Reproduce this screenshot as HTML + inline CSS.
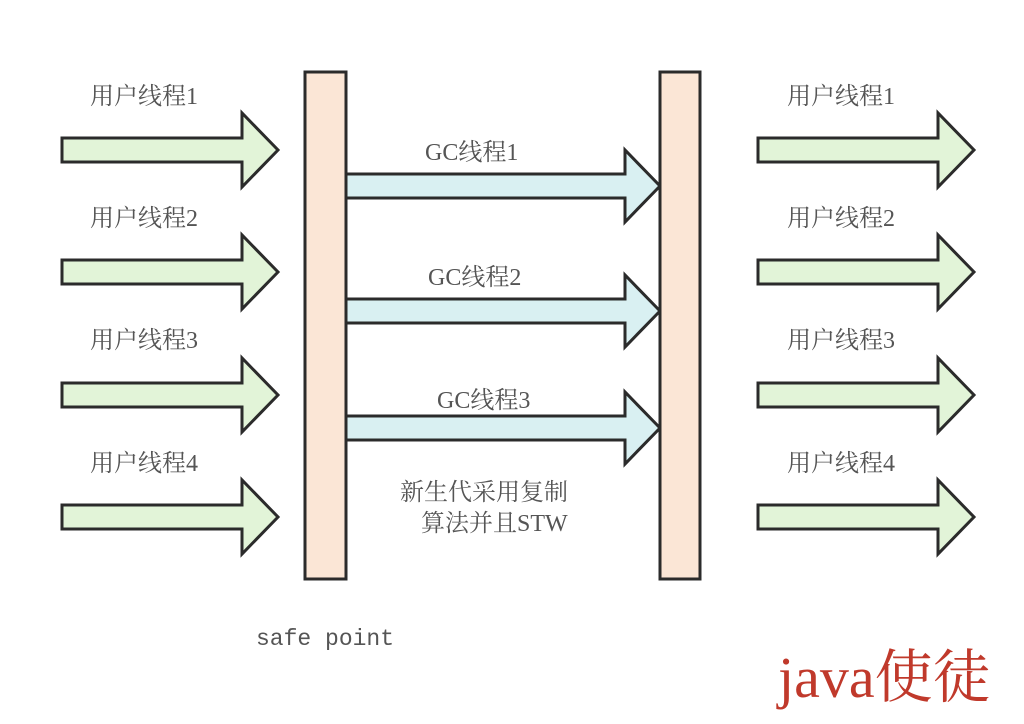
<!DOCTYPE html><html><head><meta charset="utf-8"><style>body{margin:0;background:#fff}svg{display:block}
text{font-family:"Liberation Serif","Noto Serif CJK SC",serif;fill:#555;font-size:24px}</style></head><body>
<svg width="1024" height="724" viewBox="0 0 1024 724" xmlns="http://www.w3.org/2000/svg">
<defs>
<g id="ua"><path d="M0,-12 H180 V-37 L216,0 L180,37 V12 H0 Z" fill="#e2f4d8" stroke="#2b2b2b" stroke-width="3"/></g>
<g id="ga"><path d="M0,-12 H279 V-36 L314,0 L279,36 V12 H0 Z" fill="#d9f0f2" stroke="#2b2b2b" stroke-width="3"/></g>
</defs>
<use href="#ua" x="62" y="150"/><use href="#ua" x="62" y="272"/><use href="#ua" x="62" y="395"/><use href="#ua" x="62" y="517"/>
<use href="#ua" x="758" y="150"/><use href="#ua" x="758" y="272"/><use href="#ua" x="758" y="395"/><use href="#ua" x="758" y="517"/>
<use href="#ga" x="346" y="186"/><use href="#ga" x="346" y="311"/><use href="#ga" x="346" y="428"/>
<rect x="305" y="72" width="41" height="507" fill="#fbe6d6" stroke="#2b2b2b" stroke-width="3"/>
<rect x="660" y="72" width="40" height="507" fill="#fbe6d6" stroke="#2b2b2b" stroke-width="3"/>
<text x="90" y="104">用户线程1</text><text x="90" y="226">用户线程2</text><text x="90" y="348">用户线程3</text><text x="90" y="471">用户线程4</text>
<text x="787" y="104">用户线程1</text><text x="787" y="226">用户线程2</text><text x="787" y="348">用户线程3</text><text x="787" y="471">用户线程4</text>
<text x="425" y="160">GC线程1</text><text x="428" y="285">GC线程2</text><text x="437" y="408">GC线程3</text>
<text x="400" y="500">新生代采用复制</text><text x="421" y="531">算法并且STW</text>
<text x="256" y="645" style="font-family:'Liberation Mono',monospace;font-size:23px">safe point</text>
<text x="778" y="697" style="fill:#c0392b;font-size:58px">java使徒</text>
</svg></body></html>
